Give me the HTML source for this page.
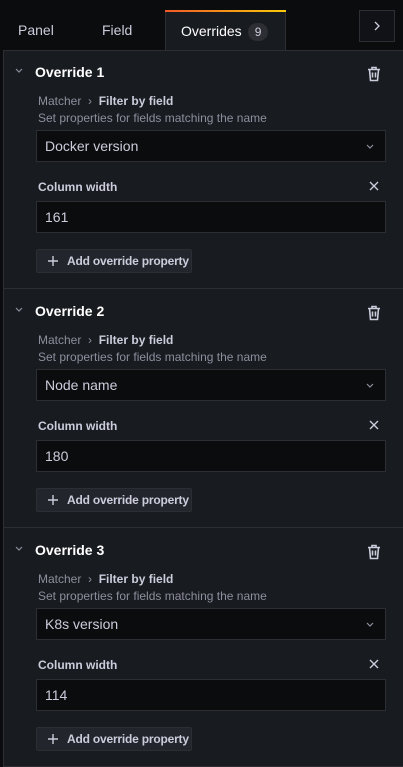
<!DOCTYPE html>
<html><head><style>
*{box-sizing:border-box;margin:0;padding:0}
body{width:403px;height:767px;background:#0b0c0e;font-family:"Liberation Sans",sans-serif;color:#ccccdc;position:relative;overflow:hidden}
.tab{position:absolute;top:10px;height:40px;font-size:14px;line-height:40px;color:#ccccdc}
.active{left:165px;width:121px;background:#181b1f;border:1px solid #2c2e33;border-bottom:none;padding-left:15px;color:#fff;z-index:2}
.active:before{content:"";position:absolute;left:-1px;right:-1px;top:-1px;height:2px;background:linear-gradient(90deg,#f05a28,#fbca0a)}
.badge{display:inline-block;background:#2c2e33;border-radius:10px;font-size:12px;line-height:18px;padding:0 7px;margin-left:6px;color:#ccccdc}
.next{position:absolute;left:359px;top:10px;width:36px;height:32px;border:1px solid #2c2e33;background:#111217}
.panel{position:absolute;left:3px;top:50px;width:400px;height:717px;background:#181b1f;box-shadow:inset 1px 1px 0 #2c2e33}
.sec{position:absolute;left:0;width:400px;height:239px;border-bottom:1px solid #2c2e33}
.sec>*{position:absolute;white-space:nowrap}
.h{left:32px;top:14px;font-size:14px;font-weight:bold;color:#fff}
.m{left:35px;top:44px;font-size:12px;color:#8e8e9e}
.m b{color:#ccccdc}
.d{left:35px;top:61px;font-size:12px;color:#8e8e9e}
.box{left:33px;width:350px;height:32px;background:#0b0c0e;border:1px solid #2c2e33;font-size:14px;line-height:30px;padding-left:8px;color:#ccccdc}
.lab{left:35px;top:130px;font-size:12px;font-weight:bold;color:#ccccdc}
.btn{left:33px;top:199px;width:156px;height:24px;background:#22252b;border:1px solid #2c2e33;border-radius:2px;font-size:12px;font-weight:bold;line-height:22px;padding-left:30px;color:#ccccdc;letter-spacing:-0.2px}
</style></head><body>
<div class="tab" style="left:18px">Panel</div>
<div class="tab" style="left:102px">Field</div>
<div class="tab active">Overrides<span class="badge">9</span></div>
<div class="next"><svg width="34" height="30"><path d="M15 11l4 4-4 4" stroke="#ccccdc" fill="none" stroke-width="1.3"/></svg></div>
<div class="panel">
<div class="sec" style="top:0">
<svg style="left:11px;top:17px" width="10" height="8"><path d="M2 2l3 3 3-3" stroke="#8e8e9e" fill="none" stroke-width="1.2"/></svg>
<div class="h">Override 1</div>
<svg style="left:364px;top:16px" width="14" height="16" viewBox="0 0 14 16"><path d="M1 3.5h12M5 3.5V1.5h4v2M2.5 3.5l1 11h7l1-11M5.5 6.5v5M8.5 6.5v5" stroke="#ccccdc" fill="none" stroke-width="1.6"/></svg>
<div class="m">Matcher &nbsp;›&nbsp; <b>Filter by field</b></div>
<div class="d">Set properties for fields matching the name</div>
<div class="box" style="top:80px">Docker version</div>
<svg style="left:362px;top:93px" width="10" height="8"><path d="M2 2l3 3 3-3" stroke="#8e8e9e" fill="none" stroke-width="1.2"/></svg>
<div class="lab">Column width</div>
<svg style="left:366px;top:131px" width="10" height="10"><path d="M1 1l8 8M9 1l-8 8" stroke="#ccccdc" stroke-width="1.4"/></svg>
<div class="box" style="top:151px">161</div>
<div class="btn">Add override property</div>
<svg style="left:44px;top:205px" width="12" height="12"><path d="M6 1v10M1 6h10" stroke="#ccccdc" stroke-width="1.4"/></svg>
</div>
<div class="sec" style="top:239px">
<svg style="left:11px;top:17px" width="10" height="8"><path d="M2 2l3 3 3-3" stroke="#8e8e9e" fill="none" stroke-width="1.2"/></svg>
<div class="h">Override 2</div>
<svg style="left:364px;top:16px" width="14" height="16" viewBox="0 0 14 16"><path d="M1 3.5h12M5 3.5V1.5h4v2M2.5 3.5l1 11h7l1-11M5.5 6.5v5M8.5 6.5v5" stroke="#ccccdc" fill="none" stroke-width="1.6"/></svg>
<div class="m">Matcher &nbsp;›&nbsp; <b>Filter by field</b></div>
<div class="d">Set properties for fields matching the name</div>
<div class="box" style="top:80px">Node name</div>
<svg style="left:362px;top:93px" width="10" height="8"><path d="M2 2l3 3 3-3" stroke="#8e8e9e" fill="none" stroke-width="1.2"/></svg>
<div class="lab">Column width</div>
<svg style="left:366px;top:131px" width="10" height="10"><path d="M1 1l8 8M9 1l-8 8" stroke="#ccccdc" stroke-width="1.4"/></svg>
<div class="box" style="top:151px">180</div>
<div class="btn">Add override property</div>
<svg style="left:44px;top:205px" width="12" height="12"><path d="M6 1v10M1 6h10" stroke="#ccccdc" stroke-width="1.4"/></svg>
</div>
<div class="sec" style="top:478px">
<svg style="left:11px;top:17px" width="10" height="8"><path d="M2 2l3 3 3-3" stroke="#8e8e9e" fill="none" stroke-width="1.2"/></svg>
<div class="h">Override 3</div>
<svg style="left:364px;top:16px" width="14" height="16" viewBox="0 0 14 16"><path d="M1 3.5h12M5 3.5V1.5h4v2M2.5 3.5l1 11h7l1-11M5.5 6.5v5M8.5 6.5v5" stroke="#ccccdc" fill="none" stroke-width="1.6"/></svg>
<div class="m">Matcher &nbsp;›&nbsp; <b>Filter by field</b></div>
<div class="d">Set properties for fields matching the name</div>
<div class="box" style="top:80px">K8s version</div>
<svg style="left:362px;top:93px" width="10" height="8"><path d="M2 2l3 3 3-3" stroke="#8e8e9e" fill="none" stroke-width="1.2"/></svg>
<div class="lab">Column width</div>
<svg style="left:366px;top:131px" width="10" height="10"><path d="M1 1l8 8M9 1l-8 8" stroke="#ccccdc" stroke-width="1.4"/></svg>
<div class="box" style="top:151px">114</div>
<div class="btn">Add override property</div>
<svg style="left:44px;top:205px" width="12" height="12"><path d="M6 1v10M1 6h10" stroke="#ccccdc" stroke-width="1.4"/></svg>
</div>
</div>
</body></html>
